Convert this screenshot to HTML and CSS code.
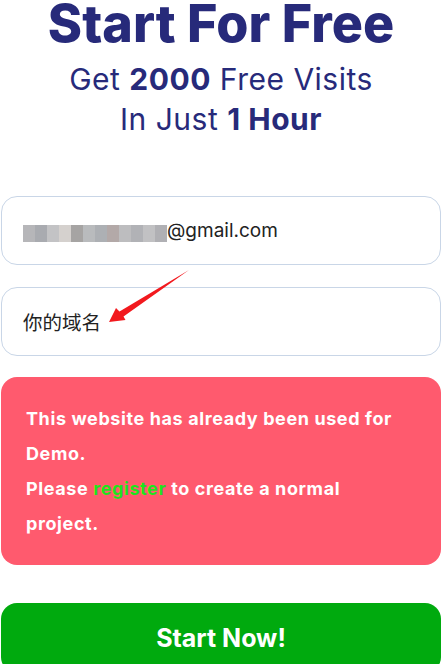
FILE: index.html
```html
<!DOCTYPE html>
<html lang="en">
<head>
<meta charset="utf-8">
<title>Start For Free</title>
<link rel="stylesheet" href="styles.css">
</head>
<body>
<main class="page">
  <header class="hero">
    <h1 class="title">Start For Free</h1>
    <p class="subtitle">Get <b>2000</b> Free Visits<br>In Just <b>1 Hour</b></p>
  </header>
  <form class="form">
    <div class="field">
      <span class="mosaic">
        <i style="background:#b6b6b9"></i><i style="background:#a9abb0"></i><i style="background:#c3c3c5"></i><i style="background:#d5d1ce"></i><i style="background:#a6a4a3"></i><i style="background:#b9bbbd"></i><i style="background:#adb0b4"></i><i style="background:#b3a9a8"></i><i style="background:#bdbdbf"></i><i style="background:#b1b2b6"></i><i style="background:#c1c1c3"></i><i style="background:#b0b0b4"></i>
      </span><span class="value">@gmail.com</span>
    </div>
    <div class="field">
      <span class="value cjk">你的域名</span>
    </div>
    <div class="alert">
      <p>This website has already been used for Demo.</p>
      <p>Please <a class="link" href="#">register</a> to create a normal project.</p>
    </div>
    <button class="cta" type="button">Start Now!</button>
  </form>
  <svg class="arrow" width="100" height="65" viewBox="0 0 100 65">
    <path d="M9 57 L16 43 L19.5 46.5 L89 5 L23.5 51.5 L25.5 55 Z" fill="#f2191e"/>
  </svg>
</main>
</body>
</html>
```

FILE: styles.css
```css
* { box-sizing: border-box; }
html, body { margin: 0; padding: 0; background: #fff; }
body { font-family: Inter, "Noto Sans", sans-serif; }
.page { position: relative; width: 442px; padding: 0 1px; }
.hero { text-align: center; color: #272a7a; }
.title { margin: 0; font-size: 52px; font-weight: 800; line-height: 48px; letter-spacing: 0; }
.subtitle { margin: 11px 0 0; font-size: 30px; font-weight: 400; line-height: 40px; letter-spacing: 0.5px; }
.subtitle b { font-weight: 700; }
.form { display: flex; flex-direction: column; margin-top: 57px; }
.field { height: 69px; border: 1px solid #c9d6e7; border-radius: 16px; display: flex; align-items: center; padding-left: 21px; font-size: 19px; color: #222; margin-bottom: 22px; }
.field:nth-child(2) { margin-bottom: 21px; }
.mosaic { display: flex; height: 17px; margin-top: 6px; }
.mosaic i { width: 12px; height: 17px; display: block; }
.value { font-family: Inter, sans-serif; }
.cjk { font-family: "Noto Sans CJK SC", sans-serif; font-size: 19.5px; }
.alert { background: #ff5a6e; border-radius: 16px; padding: 24px 40px 24px 25px; color: #fff; font-weight: 700; font-size: 18px; letter-spacing: 0.6px; line-height: 35px; }
.alert p { margin: 0; }
.link { color: #1ee41e; text-decoration: none; }
.cta { margin-top: 38px; height: 70px; border: 0; border-radius: 16px; background: #00aa0e; color: #fff; font-family: Inter, sans-serif; font-weight: 700; font-size: 25px; width: 100%; padding-bottom: 2px; }
.arrow { position: absolute; left: 100px; top: 265px; }
```
